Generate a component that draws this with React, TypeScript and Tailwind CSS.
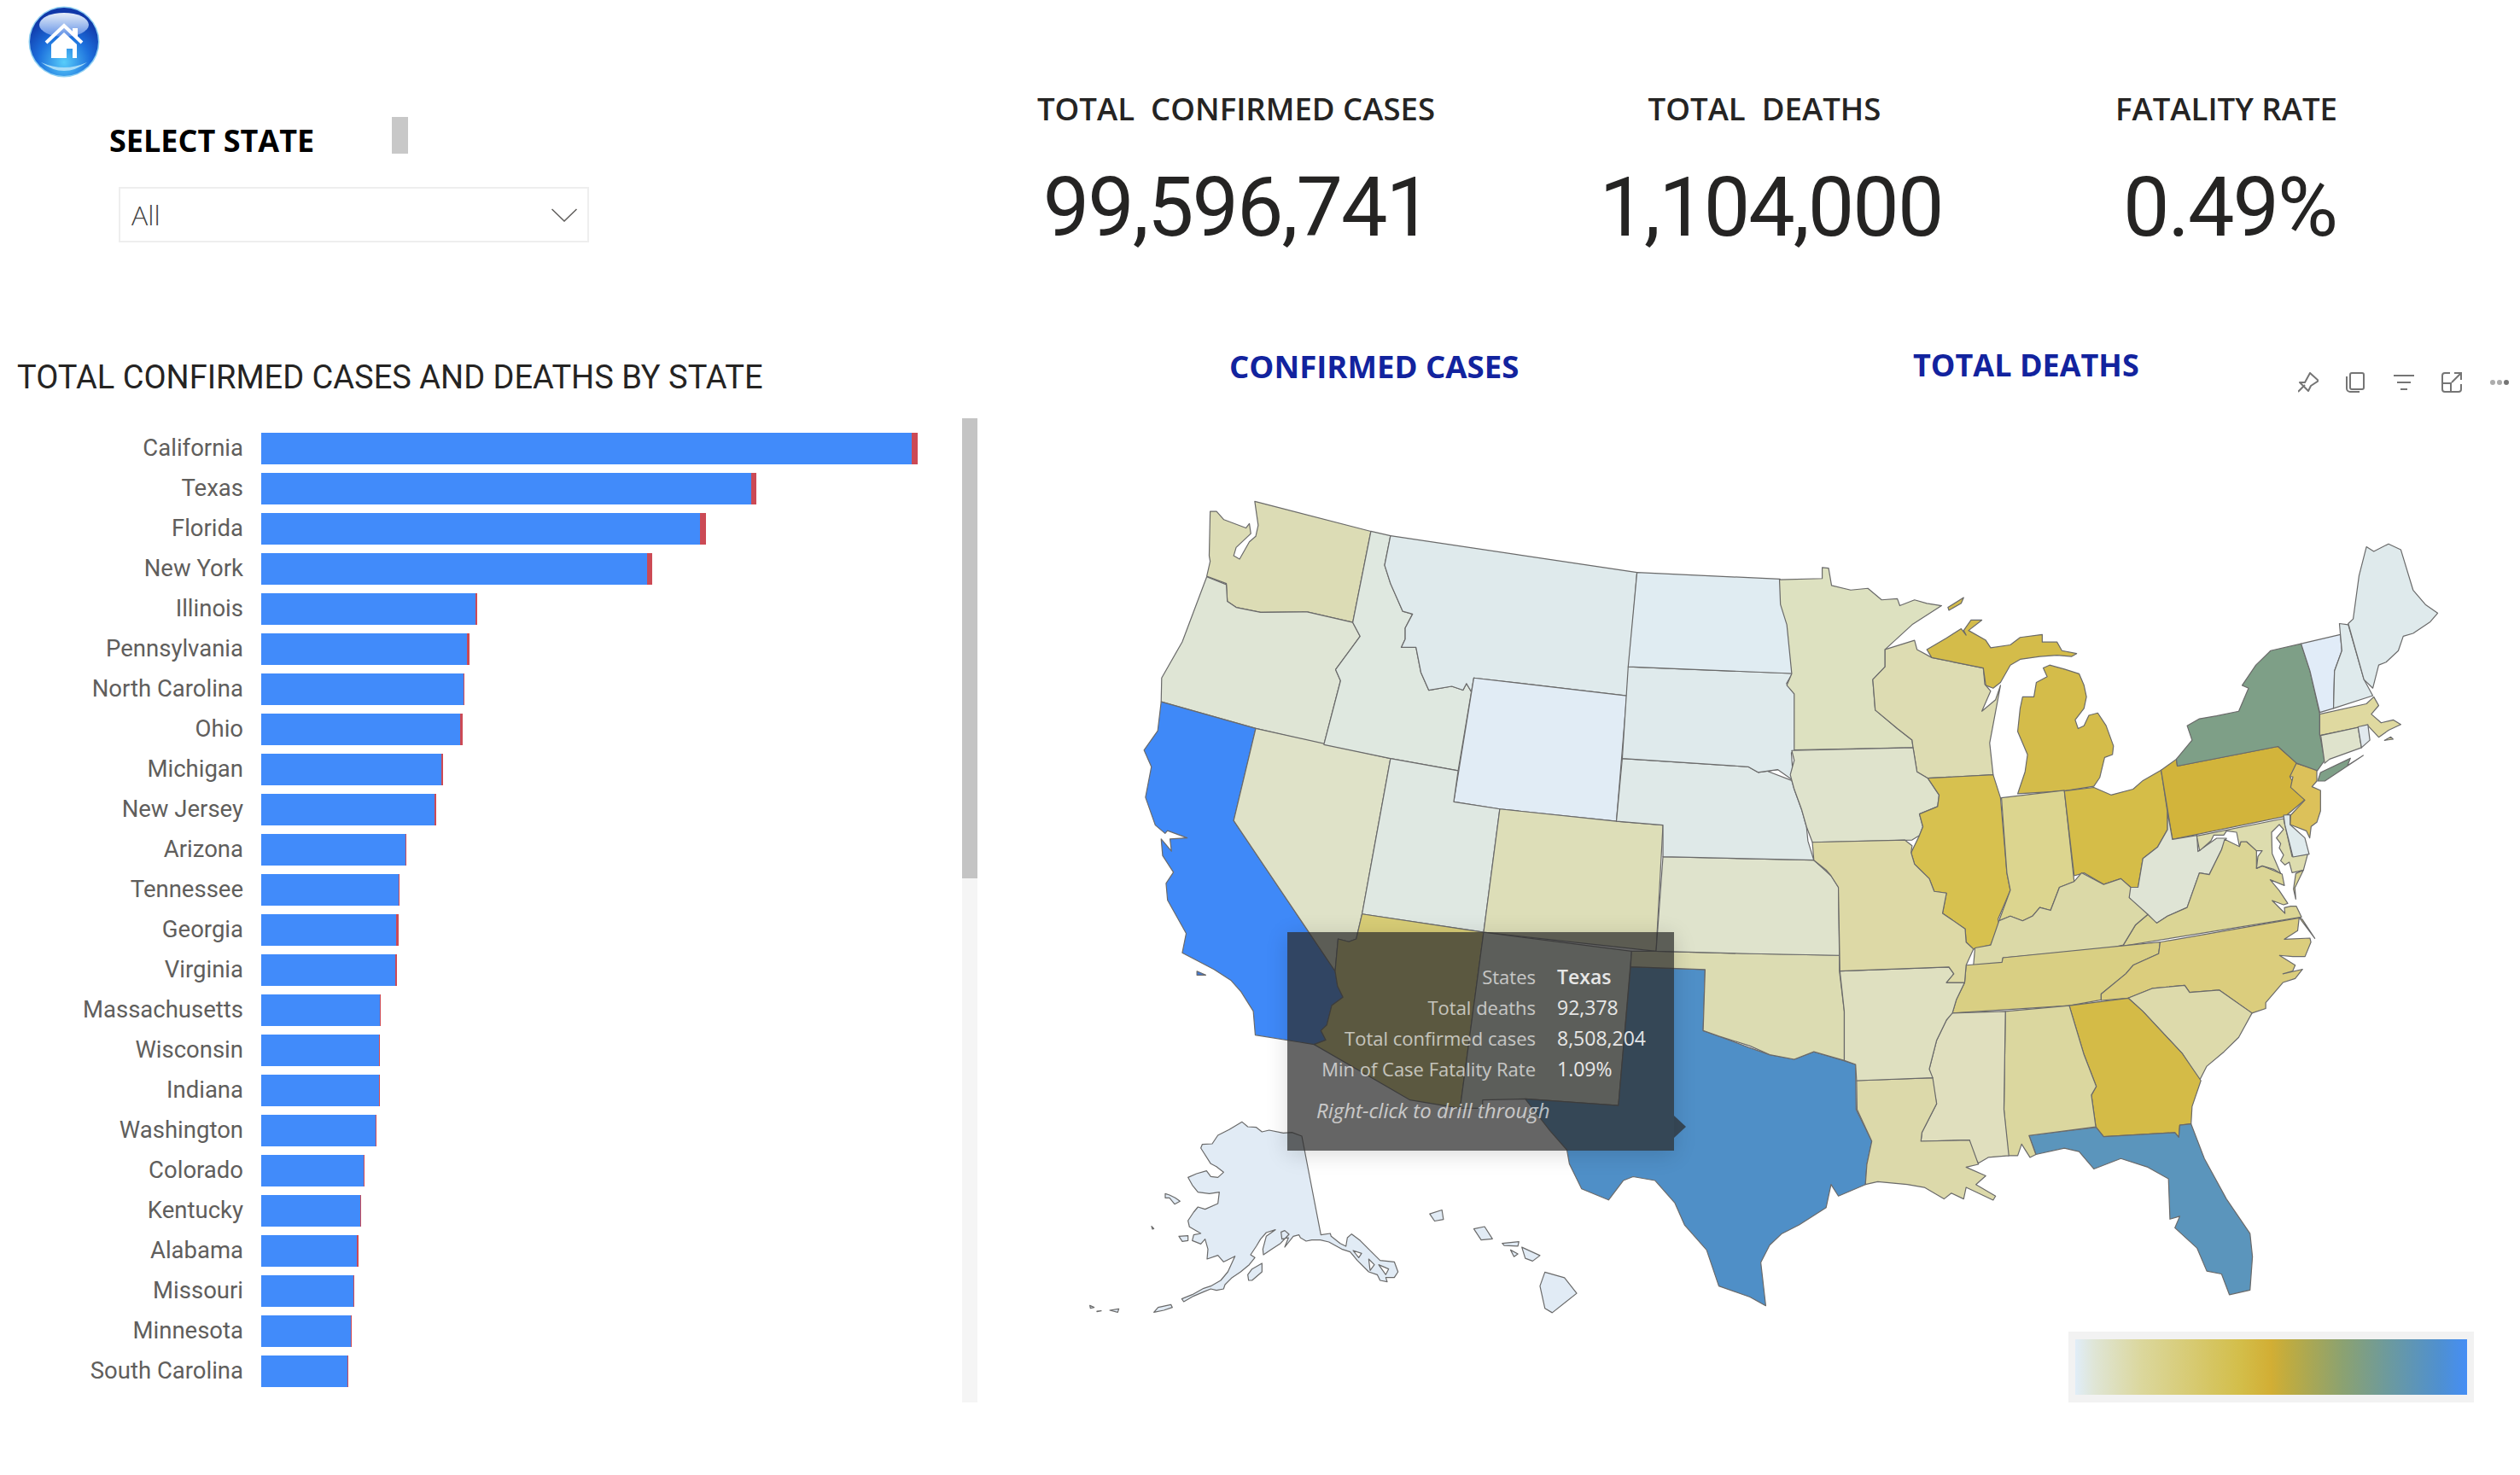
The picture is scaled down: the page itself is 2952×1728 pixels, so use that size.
import * as React from "react";

// Bars: state, end of blue part, end of red part (page x, bars start at 306)
const bars: [string, number, number][] = [
  ["California", 1068, 1075],
  ["Texas", 880, 886],
  ["Florida", 820, 826.5],
  ["New York", 757.5, 764],
  ["Illinois", 557, 558.5],
  ["Pennsylvania", 546.5, 550],
  ["North Carolina", 542.5, 544],
  ["Ohio", 539, 542],
  ["Michigan", 516.5, 519],
  ["New Jersey", 509, 510.5],
  ["Arizona", 474.5, 476],
  ["Tennessee", 466.5, 467.5],
  ["Georgia", 464, 467],
  ["Virginia", 463, 464.5],
  ["Massachusetts", 445, 446],
  ["Wisconsin", 444, 444.5],
  ["Indiana", 444, 444.5],
  ["Washington", 439.5, 440],
  ["Colorado", 425.5, 426.5],
  ["Kentucky", 422, 423],
  ["Alabama", 418, 419.5],
  ["Missouri", 414, 415],
  ["Minnesota", 411, 411.5],
  ["South Carolina", 407, 407.5],
];

// Map outlines were traced in separate crops, each with its own scale to page px
const traced = (ox: number, oy: number, sx: number, sy: number) => (s: string) =>
  s
    .split(" ")
    .map((p) => {
      const [x, y] = p.split(",").map(Number);
      return `${ox + x / sx},${oy + y / sy}`;
    })
    .join(" ");

const west = traced(1250, 560, 1.742, 1.537);
const east = traced(2050, 600, 1.738, 1.479);
const ak = traced(1270, 1300, 3, 3);
const mid = traced(2560, 860, 3, 3);

const states: [string, string][] = [
  ["#dcdcb5", west("383,42 620,96 583,260 490,241 395,242 345,233 327,222 325,190 285,177 292,150 290,140 292,60 305,60 320,75 350,85 365,90 372,82 375,100 345,125 340,140 352,146 372,115 385,105 390,85")],
  ["#dfe5d5", west("285,178 325,192 327,222 345,233 395,242 490,241 583,260 598,285 548,345 558,365 524,480 385,451 192,403 193,360 235,295")],
  ["#3f89f8", west("192,403 385,451 340,617 547,888 552,915 563,935 540,950 530,985 518,995 528,1012 504,1020 384,1003 380,960 355,925 335,905 300,885 235,855 243,820 205,760 202,730 217,710 195,680 192,650 213,672 210,650 245,648 205,635 200,640 180,625 160,575 172,520 157,490 185,455")],
  ["#3f79d8", west("265,888 283,895 265,895")],
  ["#dfe2c8", west("385,451 660,505 602,785 590,830 575,835 553,830 547,888 340,617")],
  ["#dfe8e0", west("620,96 660,104 648,157 660,190 685,240 705,245 690,270 690,290 682,305 712,305 722,350 738,382 785,375 808,382 815,370 825,385 798,527 660,505 524,480 558,365 548,345 598,285 583,260")],
  ["#dfeaec", west("660,104 1163,170 1142,392 830,360 825,385 815,370 808,382 785,375 738,382 722,350 712,305 682,305 690,290 690,270 705,245 685,240 660,190 648,157")],
  ["#e1ecf5", west("830,360 1142,392 1121,618 883,596 789,583")],
  ["#dfe8e2", west("660,505 798,527 789,583 883,596 850,818 602,785")],
  ["#dddeb8", west("883,596 1121,618 1216,625 1202,852 850,818")],
  ["#d8cd76", west("602,785 850,818 802,1135 700,1120 504,1020 528,1012 518,995 530,985 540,950 563,935 552,915 547,888 553,830 575,835 590,830")],
  ["#dfe5d5", west("850,818 1152,852 1125,1130 935,1118 848,1120 848,1135 802,1135")],
  ["#4f8fc7", `${west("1150,880 1302,885 1298,995 1330,1005 1390,1025")} ${east("40,940 90,948 130,935 190,950 215,957 216,1035 248,1090 238,1130 235,1165 180,1185 165,1165 155,1205 100,1235 65,1250 40,1270 22,1300 30,1360 32,1375 0,1360")} ${west("1330,1455 1305,1390 1260,1345 1240,1305 1200,1265 1155,1258 1135,1265 1105,1300 1050,1280 1025,1235 1020,1210 985,1175 935,1118 1125,1130")}`],
  ["#dcdcb2", `${west("1152,852 1202,852")} ${east("0,765 182,768 182,795 192,865 192,950 130,935 90,948 40,940 0,925")} ${west("1330,1005 1298,995 1302,885 1150,880")}`],
  ["#dfe3cc", `${west("1216,682")} ${east("130,603 165,630 180,650 182,768 0,765")} ${west("1202,852")}`],
  ["#dfe9e8", `${west("1133,505 1390,520 1410,530 1450,525")} ${east("30,447 85,465 90,480 105,515 115,545 118,570 130,603")} ${west("1216,682 1216,625 1121,618")}`],
  ["#dfeaec", west("1145,340 1480,352 1468,370 1485,390 1485,490 1478,495 1482,545 1450,525 1410,530 1390,520 1133,505")],
  ["#e0ecf2", west("1163,170 1455,182 1458,230 1470,260 1480,352 1145,340")],
  // Alaska and islands
  ["#e1ebf5", ak("555,43 575,60 605,62 625,78 650,72 700,82 730,80 765,93 832,440 865,435 868,445 900,470 920,480 925,450 940,437 970,460 1000,490 1040,530 1090,535 1103,570 1090,590 1060,590 1065,605 1040,600 1030,580 1000,570 960,530 935,500 905,490 860,465 830,458 800,458 780,462 760,450 755,440 735,445 705,483 718,450 695,455 692,430 705,425 720,438 690,470 660,490 630,510 628,490 640,445 672,422 640,432 620,455 605,480 585,510 600,520 580,545 550,570 520,590 495,615 490,630 465,635 445,630 420,640 385,655 350,675 343,665 380,650 420,628 445,620 480,600 505,570 530,515 500,530 490,535 470,512 432,525 435,490 425,455 410,472 380,460 385,440 410,435 370,412 365,390 385,360 400,342 425,350 470,330 475,290 440,295 400,290 380,265 365,238 395,225 430,215 445,235 470,238 490,220 465,200 445,190 410,135 415,122 450,120 470,90 510,70")],
  ["#ffffff", ak("945,495 975,505 965,520")],
  ["#ffffff", ak("1000,525 1020,545 1005,565")],
  ["#ffffff", ak("1035,545 1070,560 1060,580")],
  ["#e1ebf5", ak("285,295 300,300 320,310 337,322 318,332 300,310 285,310")],
  ["#e1ebf5", ak("333,445 365,443 365,460 345,463")],
  ["#e1ebf5", ak("575,580 590,560 625,540 625,570 590,600 578,600")],
  ["#e1ebf5", ak("237,410 245,418 240,420")],
  ["#e1ebf5", ak("245,712 260,695 305,685 310,695 280,705")],
  ["#e1ebf5", ak("20,688 35,695 22,698")],
  ["#e1ebf5", ak("45,708 60,707 45,710")],
  ["#e1ebf5", ak("90,705 122,700 118,712")],
  ["#e1ebf5", west("740,1325 765,1318 768,1335 750,1338")],
  ["#e1ebf5", west("830,1352 852,1348 868,1370 845,1372")],
  ["#e1ebf5", west("888,1378 922,1375 920,1383 892,1382")],
  ["#e1ebf5", west("905,1390 920,1397 912,1402")],
  ["#e1ebf5", west("928,1385 965,1400 950,1410 935,1405")],
  ["#e1ebf5", west("975,1430 1015,1440 1040,1468 990,1503 975,1495 965,1455")],
  // Eastern half
  ["#dde1c0", east("60,117 147,115 147,96 160,97 166,127 205,135 240,132 268,152 300,150 305,162 335,152 360,158 390,162 330,195 275,238 275,268 250,290 255,343 300,375 330,395 332,408 90,412 90,315 75,300 85,280 75,195 62,160")],
  ["#d4bc4a", east("403,165 435,148 430,158 405,170")],
  ["#dddcb2", east("275,238 335,222 340,238 370,252 475,270 478,298 490,310 472,345 500,325 510,300 488,400 495,455 362,461 340,450 332,408 330,395 300,375 255,343 250,290 275,268")],
  ["#d4bc4a", east("360,238 400,218 430,202 440,213 435,205 450,187 472,187 445,205 480,222 490,235 530,230 550,217 595,212 595,225 625,225 635,240 665,245 655,250 625,248 590,250 550,255 530,265 510,295 495,305 480,300 475,270 370,252")],
  ["#d4bc4a", east("545,488 560,450 565,420 545,380 550,340 555,320 578,320 583,295 605,285 597,270 610,265 640,272 670,280 680,300 685,320 680,340 662,360 668,375 680,370 690,352 708,348 725,370 740,405 738,420 722,425 712,460 700,475 640,483")],
  ["#dfe3cc", east("85,413 332,408 340,450 362,461 385,490 382,510 345,523 352,545 345,560 330,568 127,572 115,545 105,515 90,480 82,455 90,430")],
  ["#d7c14f", east("362,461 495,455 510,495 523,625 530,655 505,705 507,715 490,750 455,757 440,745 438,722 392,695 400,660 375,657 365,635 335,610 328,590 345,560 352,545 345,523 382,510 385,490")],
  ["#dcd58f", east("512,495 640,482 660,640 630,650 612,690 590,685 575,700 555,708 530,700 507,708 530,655 523,625")],
  ["#d5bd48", east("640,483 700,477 735,490 780,480 800,465 837,447 850,520 850,550 830,580 800,600 790,650 775,650 755,635 720,645 680,625 660,630")],
  ["#d2b43b", east("837,447 868,428 870,440 1075,406 1113,435 1100,460 1130,498 1090,527 860,567")],
  ["#dcc15a", mid("390,103 462,125 462,165 445,185 475,198 475,270 462,310 442,325 437,365 425,340 368,318 370,285 420,232 370,187 378,150 367,150")],
  ["#7e9f87", east("868,428 900,395 890,370 915,358 950,353 995,345 1015,305 1002,300 1030,265 1060,240 1122,228 1140,275 1160,350 1160,385 1170,430 1155,448 1113,435 1075,406 870,440")],
  ["#7e9f87", mid("465,165 490,165 625,75 570,110 580,85 475,135")],
  ["#e1ecf8", east("1122,228 1202,212 1205,240 1190,275 1188,340 1160,347 1140,275")],
  ["#dfeaec", east("1200,193 1218,195 1250,290 1268,318 1188,340 1190,275 1205,240")],
  ["#dfeaec", east("1218,193 1228,185 1240,110 1255,60 1270,68 1300,55 1325,65 1350,135 1375,160 1400,175 1385,190 1350,210 1330,215 1320,240 1295,260 1280,265 1268,305 1250,290")],
  ["#dfd9a0", east("1160,350 1255,332 1270,320 1280,335 1265,350 1285,365 1310,360 1325,368 1300,378 1280,390 1258,370 1160,387")],
  ["#dfd9a0", mid("700,22 722,10 730,18")],
  ["#dfe3cc", east("1162,387 1238,373 1245,408 1180,428 1170,435")],
  ["#e1e9ee", east("1238,372 1258,368 1262,395 1245,408")],
  ["#dfe4d5", east("850,520 860,567 910,560 912,588 950,565 970,565 960,585 935,628 915,625 890,685 850,700 828,712 800,695 772,668 772,650 790,650 800,600 830,580 850,550")],
  ["#dbd595", `${east("828,712 850,700 890,685 915,625 935,628 960,585")} ${mid("138,370 190,395 195,378 215,378 250,410 250,472 270,463 340,492 348,532 298,512 330,550 360,595 345,600 305,585 350,630 348,610 370,605 390,605 408,643")} ${east("735,755 760,750 785,715 810,697")}`],
  ["#dbd9a7", east("507,708 530,700 555,708 575,700 590,685 612,690 630,650 660,640 675,625 720,645 755,635 775,650 772,668 810,697 785,715 760,750 735,755 515,772 513,782 455,785 458,755 490,750")],
  ["#d9cf83", east("440,785 513,780 515,772 835,745 832,765 780,785 765,800 715,835 715,845 650,855 412,868 420,845 437,815")],
  ["#dbcd7d", east("835,745 1118,703 1115,725 1088,740 1140,738 1142,745 1130,770 1105,770 1078,768 1110,785 1105,795 1085,800 1125,792 1110,808 1085,815 1050,850 1050,860 1022,868 955,828 895,832 885,820 820,825 770,842 715,846 715,835 765,800 780,785 832,765")],
  ["#dbcd7d", mid("400,645 455,718 410,650")],
  ["#dddaab", east("770,842 820,825 885,820 895,832 955,828 1022,868 995,910 965,935 930,960 915,985 880,938 800,865")],
  ["#d4bb47", east("650,855 770,842 800,865 880,938 918,985 900,1030 898,1060 875,1062 873,1083 865,1075 720,1082 704,1065 695,1010 705,995 680,940")],
  ["#5b95bc", east("568,1080 705,1066 720,1082 865,1075 873,1083 875,1062 898,1060 925,1120 970,1190 1018,1250 1023,1290 1018,1348 976,1356 960,1320 930,1315 910,1275 865,1240 875,1220 855,1225 852,1155 810,1135 755,1120 700,1138 670,1108 640,1102 582,1113")],
  ["#dbd79f", east("520,865 650,855 680,940 705,995 695,1010 704,1065 568,1080 582,1113 570,1118 553,1095 545,1115 525,1115 517,1035")],
  ["#e0dfbe", east("410,868 520,865 517,1035 527,1115 485,1118 465,1128 450,1110 447,1088 348,1090 350,1075 380,1025 365,965 380,915 400,880")],
  ["#dcd9aa", east("217,985 372,980 380,1025 350,1075 348,1090 447,1088 465,1130 440,1135 480,1150 460,1165 500,1185 495,1192 440,1170 435,1190 410,1180 395,1190 355,1170 320,1165 260,1160 235,1165 238,1130 248,1090 218,1035")],
  ["#dfe0c0", east("183,795 405,788 415,800 400,815 437,815 420,845 412,868 400,880 380,915 365,965 372,980 217,985 215,957 192,950 192,865")],
  ["#ddd9a6", east("127,572 315,568 330,578 328,590 335,610 365,635 375,657 400,660 392,695 438,722 440,745 455,757 440,785 437,815 400,815 415,800 405,788 183,795 180,650 165,630 155,620 130,603")],
  ["#dddcae", mid("40,358 345,297 350,320 375,430 430,422 415,478 375,487 365,450 350,460 335,445 345,425 330,400 335,385 320,365 345,335 330,318 303,345 305,420 335,490 310,475 270,463 250,472 255,430 270,410 250,410 215,378 195,378 190,395 180,345 145,340 135,355 100,355 90,375 50,410")],
  ["#dbd595", mid("415,478 385,540 388,580 380,545 388,490")],
  ["#dfeaec", mid("345,285 368,283 368,318 420,365 435,422 378,432 350,320")],
];

const HomeButton = () => (
  <svg viewBox="0 0 84 84" className="h-[84px] w-[84px]">
    <defs>
      <radialGradient id="ball" cx="50%" cy="80%" r="70%">
        <stop offset="0%" stopColor="#58cdfa" />
        <stop offset="55%" stopColor="#1c6fdc" />
        <stop offset="100%" stopColor="#1038a8" />
      </radialGradient>
      <linearGradient id="gloss" x1="0" y1="0" x2="0" y2="1">
        <stop offset="0%" stopColor="#e6eef8" />
        <stop offset="100%" stopColor="#5f8fe6" />
      </linearGradient>
    </defs>
    <circle cx="42" cy="42" r="41.5" fill="#8fd0f2" />
    <circle cx="42" cy="42" r="40" fill="url(#ball)" />
    <ellipse cx="42" cy="22" rx="29" ry="14" fill="url(#gloss)" />
    <path d="M15 66 Q42 86 69 66 Q42 78 15 66Z" fill="#a8dcf8" />
    <path d="M21 43 L42 23 L63 43" fill="none" stroke="#fff" strokeWidth="4" />
    <path d="M52 26 H58 V38 L52 32Z" fill="#fff" />
    <path d="M27 45 L42 31 L57 45 V61 H52 V50 H45 V61 H27Z" fill="#fff" />
  </svg>
);

const VisualIcons = () => (
  <div className="flex items-center gap-[32px] text-[#757575]">
    <svg viewBox="0 0 24 24" className="h-6 w-6" fill="none" stroke="currentColor" strokeWidth="2" strokeLinejoin="round">
      <path d="M0 23 L8 15" />
      <path d="M2 12 L8 12 L14 1 L24 10 L15 16 L12 22Z" />
    </svg>
    <svg viewBox="0 0 24 24" className="h-6 w-6" fill="none" stroke="currentColor" strokeWidth="2">
      <rect x="5" y="1" width="16" height="19" rx="2" />
      <path d="M1 5 V19 a4 4 0 0 0 4 4 H16" />
    </svg>
    <svg viewBox="0 0 24 24" className="h-6 w-6" fill="none" stroke="currentColor" strokeWidth="2">
      <path d="M0 4 H24 M4 12 H20 M8 20 H16" />
    </svg>
    <svg viewBox="0 0 24 24" className="h-6 w-6" fill="none" stroke="currentColor" strokeWidth="2">
      <path d="M10 1 H4 a3 3 0 0 0 -3 3 V20 a3 3 0 0 0 3 3 H20 a3 3 0 0 0 3 -3 V14" />
      <path d="M12 12 L23 1 M15 1 H23 V9 M1 13 H11 V23" />
    </svg>
    <svg viewBox="0 0 24 6" className="h-[6px] w-6" fill="currentColor">
      <circle cx="4" cy="3" r="3" opacity="0.6" />
      <circle cx="12" cy="3" r="3" opacity="0.6" />
      <circle cx="20" cy="3" r="3" />
    </svg>
  </div>
);

const Kpi = ({ label, value, width, offset, labelClass }: { label: string; value: string; width: string; offset: string; labelClass: string }) => (
  <div className={`flex flex-col items-center pt-[104px] text-[#252423] ${width}`}>
    <div className={`whitespace-pre text-[36.6px] leading-[46px] font-semibold [font-family:'Open_Sans',sans-serif] ${labelClass}`}>{label}</div>
    <div className={`mt-[33px] text-[97px] leading-[120px] tracking-[-2px] [font-family:Roboto,sans-serif] ${offset}`}>{value}</div>
  </div>
);

const Tooltip = () => (
  <div className="absolute top-[592px] left-[348px] h-[256px] w-[453px] bg-[rgba(44,44,44,0.73)] pt-[34px] pl-[34px] text-[22px] leading-[36px] shadow-[0_4px_24px_rgba(0,0,0,0.15)] [font-family:'Open_Sans',sans-serif]">
    <div className="grid grid-cols-[257px_auto] gap-x-[25px] whitespace-nowrap">
      <div className="text-right text-white/65">States</div>
      <div className="text-[23px] font-semibold text-white/85">Texas</div>
      <div className="text-right text-white/65">Total deaths</div>
      <div className="text-[23px] font-medium text-white/85">92,378</div>
      <div className="text-right text-white/65">Total confirmed cases</div>
      <div className="text-[23px] font-medium text-white/85">8,508,204</div>
      <div className="text-right text-white/65">Min of Case Fatality Rate</div>
      <div className="text-[23px] font-medium text-white/85">1.09%</div>
    </div>
    <div className="mt-[13px] text-[24px] text-white/65 italic">Right-click to drill through</div>
    <div className="absolute top-[215px] left-full h-[26px] w-[14px] bg-[rgba(44,44,44,0.73)] [clip-path:polygon(0_0,100%_50%,0_100%)]" />
  </div>
);

export default function App() {
  return (
    <div className="flex h-[1728px] w-[2952px] flex-col bg-white">
      {/* Header: slicer and KPI cards */}
      <div className="flex h-[410px]">
        <div className="w-[1140px] pt-[7px] pl-[33px]">
          <HomeButton />
          <div className="mt-[46px] flex items-start pl-[95px]">
            <div className="mt-[6px] w-[331px] text-[36px] leading-[44px] font-bold text-black [font-family:'Open_Sans',sans-serif]">SELECT STATE</div>
            <div className="h-[43px] w-[19px] bg-[#c8c8c8]" />
          </div>
          <div className="mt-[32px] ml-[106px] flex h-[65px] w-[551px] items-center justify-between border-2 border-[#eeeeee] pr-[12px] pl-[13px] text-[32px] font-light text-[#444444] [font-family:'Open_Sans',sans-serif]">
            <span>All</span>
            <svg viewBox="0 0 30 16" className="h-[16px] w-[30px]" fill="none" stroke="#605e5c" strokeWidth="1.5">
              <path d="M0.5 1 L15 15 L29.5 1" />
            </svg>
          </div>
        </div>
        <Kpi label="TOTAL  CONFIRMED CASES" value="99,596,741" width="w-[616px]" offset="pl-[2px]" labelClass="" />
        <Kpi label="TOTAL  DEATHS" value="1,104,000" width="w-[628px]" offset="pl-[9px]" labelClass="pr-[6px]" />
        <Kpi label="FATALITY RATE" value="0.49%" width="w-[448px]" offset="pl-[8px]" labelClass="" />
      </div>

      <div className="flex flex-1">
        {/* Bar chart */}
        <div className="w-[1160px]">
          <div className="h-[80px] pt-[10px] pl-[20px] text-[38px] leading-[44px] text-[#252423] [font-family:Roboto,sans-serif]">
            TOTAL CONFIRMED CASES AND DEATHS BY STATE
          </div>
          <div className="flex">
            <div className="w-[1127px] pt-[12px]">
              {bars.map(([name, blue, red]) => (
                <div key={name} className="flex h-[47px] items-center">
                  <div className="mb-[1px] w-[285px] text-right text-[27.5px] whitespace-nowrap text-[#605e5c] [font-family:Roboto,sans-serif]">{name}</div>
                  <div className="ml-[21px] flex h-[37px]">
                    <div className="h-full bg-[#418bfa]" style={{ width: blue - 306 }} />
                    <div className="h-full bg-[#cc4a55]" style={{ width: red - blue }} />
                  </div>
                </div>
              ))}
            </div>
            <div className="h-[1153px] w-[18px] bg-[#f5f5f5]">
              <div className="h-[539px] bg-[#c4c4c4]" />
            </div>
          </div>
        </div>

        {/* Map */}
        <div className="flex-1">
          <div className="flex h-[90px] items-start">
            <div className="-mt-[4px] ml-[280px] w-[801px] text-[36.6px] leading-[46px] font-bold text-[#12239e] [font-family:'Open_Sans',sans-serif]">CONFIRMED CASES</div>
            <div className="-mt-[4px] w-[451px] text-[36px] leading-[44px] font-bold text-[#12239e] [font-family:'Open_Sans',sans-serif]">TOTAL DEATHS</div>
            <div className="mt-[26px]">
              <VisualIcons />
            </div>
          </div>
          <div className="relative">
            <svg viewBox="1160 500 1792 1055" className="block h-[1055px] w-[1792px]">
              {states.map(([fill, points], i) => (
                <polygon key={i} points={points} fill={fill} stroke="#6a6a6a" strokeWidth="1.2" strokeLinejoin="round" />
              ))}
            </svg>
            <Tooltip />
          </div>
          <div className="mt-[5px] ml-[1263px] h-[83px] w-[475px] bg-[#f2f2f2] px-[8px] py-[9px]">
            <div className="h-full w-full bg-[linear-gradient(90deg,#e0edf8_0%,#dfe5d5_5%,#dbd79c_17%,#d3be4a_42%,#d2ae34_50%,#bcab43_55%,#8ca270_68%,#6c9a9e_80%,#4f90d0_93%,#458ef5_100%)]" />
          </div>
        </div>
      </div>
    </div>
  );
}
